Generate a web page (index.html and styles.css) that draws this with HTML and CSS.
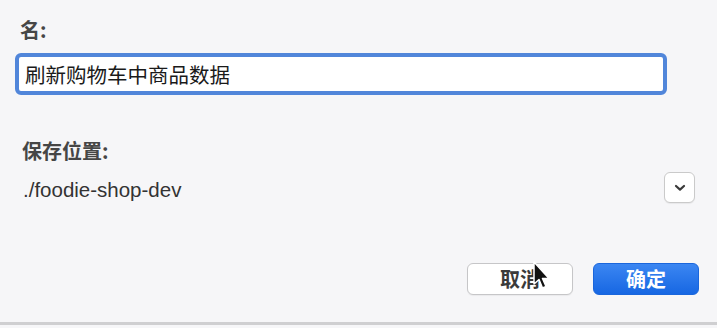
FILE: index.html
```html
<!DOCTYPE html>
<html lang="zh-CN">
<head>
<meta charset="utf-8">
<title>新建</title>
<link rel="stylesheet" href="styles.css">
</head>
<body>
<div class="dialog">
  <div class="label label-name">名:</div>
  <div class="field">刷新购物车中商品数据</div>
  <div class="label label-loc">保存位置:</div>
  <div class="loc-row">
    <div class="path">./foodie-shop-dev</div>
    <button class="dropdown" type="button" aria-label="展开">
      <svg width="12" height="8" viewBox="0 0 12 8"><path d="M2 2 L6 5.6 L10 2" fill="none" stroke="#3a3a3a" stroke-width="2.2" stroke-linecap="round" stroke-linejoin="round"/></svg>
    </button>
  </div>
  <div class="actions">
    <button class="btn btn-cancel" type="button">取消</button>
    <button class="btn btn-ok" type="button">确定</button>
  </div>
  <svg class="cursor" width="20" height="30" viewBox="0 0 20 30">
    <path d="M2 1 L2 23 L7 18.5 L10.5 27 L14 25.5 L10.5 17.5 L17 17.5 Z" fill="#111" stroke="#fff" stroke-width="1.5" stroke-linejoin="round"/>
  </svg>
</div>
</body>
</html>
```
FILE: styles.css
```css
html, body {
  margin: 0;
  padding: 0;
}
body {
  background: #f6f6f8;
  width: 717px;
  height: 328px;
  overflow: hidden;
  font-family: "Liberation Sans", "Noto Sans CJK SC", sans-serif;
}
.dialog {
  position: relative;
  box-sizing: border-box;
  height: 325px;
  padding: 18px 18px 0 15px;
  border-bottom: 3px solid #cfcfd1;
  display: flex;
  flex-direction: column;
}
.label {
  font-family: "Noto Sans CJK SC", sans-serif;
  font-size: 20px;
  line-height: 24px;
  font-weight: 700;
  color: #464646;
  padding-left: 5px;
}
.field {
  box-sizing: border-box;
  margin-top: 11px;
  width: 652px;
  height: 42px;
  border: 4px solid #5186da;
  border-radius: 6px;
  background: #fff;
  padding: 1px 0 0 6px;
  font-family: "Noto Sans CJK SC", sans-serif;
  font-size: 20.5px;
  line-height: 32px;
  color: #1a1a1a;
}
.label-loc {
  margin-top: 44px;
  padding-left: 7px;
}
.loc-row {
  margin-top: 9px;
  display: flex;
  justify-content: space-between;
  align-items: flex-start;
  padding-right: 4px;
}
.path {
  margin-top: 6px;
  padding-left: 8px;
  font-size: 20.5px;
  line-height: 24px;
  color: #333;
}
.dropdown {
  box-sizing: border-box;
  width: 31px;
  height: 31px;
  padding: 0;
  margin: 0;
  border: 1px solid #cacaca;
  border-radius: 6px;
  background: #fff;
  box-shadow: 0 1px 1px rgba(0,0,0,0.06);
  display: flex;
  align-items: center;
  justify-content: center;
}
.actions {
  margin-top: 60px;
  display: flex;
  justify-content: flex-end;
  gap: 20px;
}
.btn {
  box-sizing: border-box;
  width: 106px;
  height: 32px;
  margin: 0;
  padding: 0;
  border-radius: 6px;
  font-family: "Noto Sans CJK SC", sans-serif;
  font-size: 20px;
  font-weight: 700;
  line-height: 30px;
}
.btn-cancel {
  background: #fff;
  border: 1px solid #c6c6c8;
  color: #3a3a3a;
  box-shadow: 0 1px 1px rgba(0,0,0,0.05);
}
.btn-ok {
  background: linear-gradient(#3b86f2, #1767e3);
  border: 1px solid #1a66dc;
  color: #fff;
}
.cursor {
  position: absolute;
  left: 532px;
  top: 261px;
}
```
